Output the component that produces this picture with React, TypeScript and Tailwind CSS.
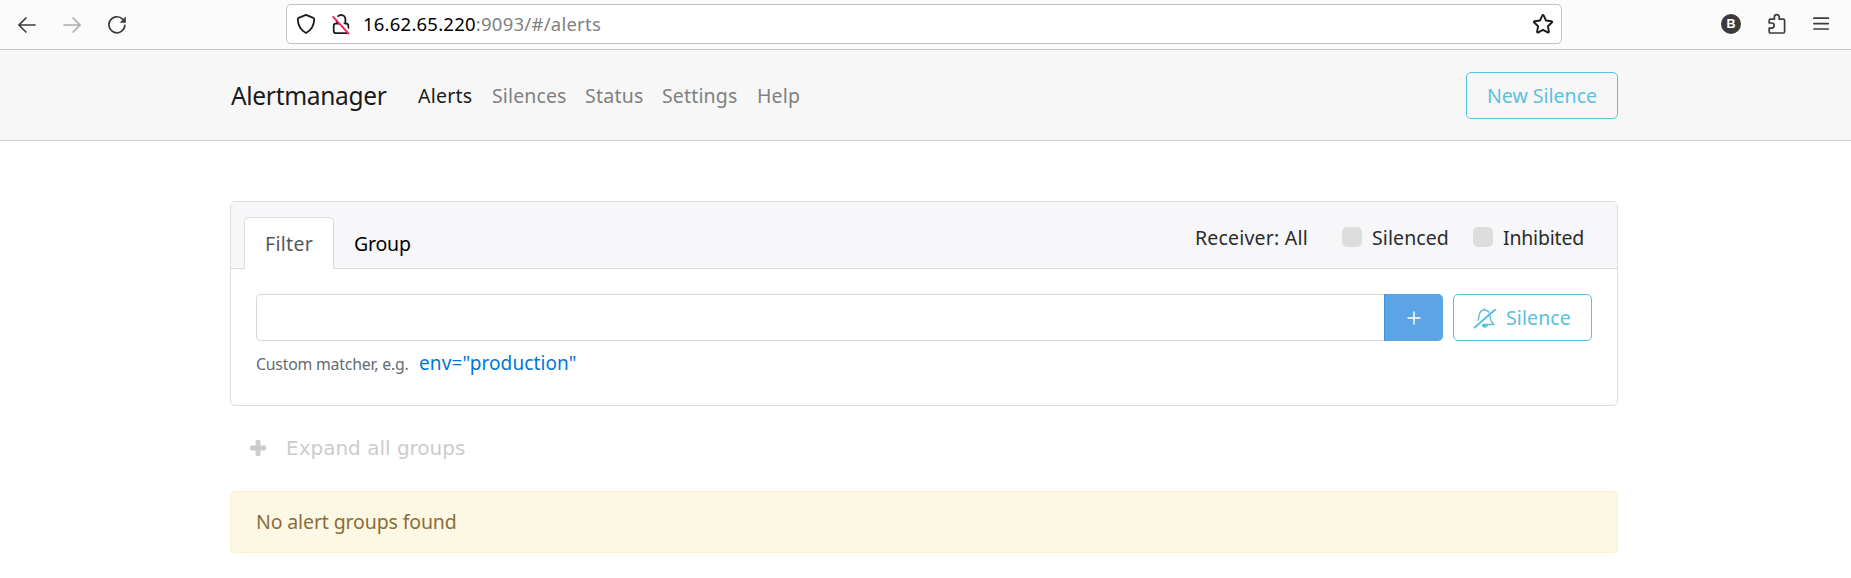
import React from "react";

const navLinks = [
  { label: "Silences", style: "w-[73px] tracking-[0.12px]" },
  { label: "Status", style: "w-[57px] tracking-[0.24px]" },
  { label: "Settings", style: "w-[75px] tracking-[0.16px]" },
  { label: "Help", style: "tracking-[0.17px]" },
];

function BrowserBar() {
  return (
    <div className="flex h-[50px] items-start border-b border-[#c6c6c8] bg-[#fbfbfb] text-[#3c3c3c]">
      <div className="flex h-[49px] w-[286px] items-center pl-[17px]">
        <svg width="20" height="20" viewBox="0 0 20 20" fill="none" stroke="currentColor" strokeWidth="1.7" strokeLinecap="round" strokeLinejoin="round">
          <path d="M18 10H1.9M8.9 3 1.9 10l7 7" />
        </svg>
        <svg className="ml-[25px] text-[#adadad]" width="20" height="20" viewBox="0 0 20 20" fill="none" stroke="currentColor" strokeWidth="1.7" strokeLinecap="round" strokeLinejoin="round">
          <path d="M2 10h16.1M11.1 3l7 7-7 7" />
        </svg>
        <svg className="ml-[25px]" width="20" height="20" viewBox="0 0 20 20" fill="none" stroke="currentColor" strokeWidth="1.7" strokeLinecap="round">
          <path d="M15.6 4.1A8 8 0 1 0 17.9 10.4" />
          <path d="M18.9 1.5v6.2h-6.2z" fill="currentColor" stroke="none" />
        </svg>
      </div>
      <div className="mt-1 flex h-10 w-[1276px] items-center rounded-[5px] border border-[#c2c2c4] bg-white pr-[7px] pl-[9px] text-[#1c1c1f]">
        <svg width="20" height="22" viewBox="0 0 20 22" fill="none" stroke="currentColor" strokeWidth="1.8" strokeLinejoin="round">
          <path d="M10 1.9 17.3 4.9Q18.2 5.3 18.2 6.3 18 15.8 10 20 2 15.8 1.8 6.3 1.8 5.3 2.7 4.9Z" />
        </svg>
        <svg className="ml-[15px]" width="20" height="22" viewBox="0 0 20 22" fill="none" strokeLinecap="round">
          <path d="M5.8 10.2V6.3A4.3 4.3 0 0 1 14.4 6.3v4" stroke="currentColor" strokeWidth="1.8" />
          <rect x="2.7" y="10.7" width="14.6" height="9.4" rx="2" stroke="currentColor" strokeWidth="1.8" />
          <path d="M3.4 3 18.6 19.4" stroke="white" strokeWidth="3.4" />
          <path d="M2.2 3.8 17.5 20.5" stroke="#f0265a" strokeWidth="1.9" />
        </svg>
        <span className="ml-[12px] text-[18.5px] leading-6 tracking-[0.22px] text-black">16.62.65.220</span>
        <span className="text-[18.5px] leading-6 tracking-[0.25px] text-[#818181]">:9093/#/alerts</span>
        <svg className="ml-auto" width="22" height="22" viewBox="0 0 22 22" fill="none" stroke="currentColor" strokeWidth="1.9" strokeLinejoin="round">
          <path d="M10.2 2.7Q11 1.4 11.8 2.7L14 7.5l5.4.7Q20.8 8.5 19.8 9.5L15.9 13.3l1 5.3Q17 20 15.7 19.4L11 16.8 6.3 19.4Q5 20 5.1 18.6l1-5.3L2.2 9.5Q1.2 8.5 2.6 8.2L8 7.5Z" />
        </svg>
      </div>
      <div className="ml-auto flex h-12 items-center pr-5">
        <span className="flex size-5 items-center justify-center rounded-full bg-[#3b3b3b] font-['Liberation_Sans',sans-serif] text-[12.5px] leading-none font-bold text-white">B</span>
        <svg className="ml-[26px]" width="20" height="22" viewBox="0 0 20 22" fill="none" stroke="currentColor" strokeWidth="1.7" strokeLinejoin="round">
          <path d="M2.2 10V7.6Q2.2 6.2 3.6 6.2H7.4V4A2.4 2.4 0 0 1 12.2 4V6.2H16.3Q17.6 6.2 17.6 7.5V18.6Q17.6 20 16.3 20H3.5Q2.2 20 2.2 18.6V15.1H4.6A2.5 2.5 0 0 0 4.6 10Z" />
        </svg>
        <svg className="ml-6" width="20" height="20" viewBox="0 0 20 20" stroke="currentColor" strokeWidth="1.7" strokeLinecap="round">
          <path d="M2.9 4.2h14.4M2.9 9.6h14.4M2.9 15h14.4" />
        </svg>
      </div>
    </div>
  );
}

function Navbar() {
  return (
    <header className="h-[91px] border-b border-[#d5d5d5] bg-[#f7f7f7]">
      <div className="ml-[230px] flex h-[90px] w-[1388px] items-center">
        <a className="w-[188px] pt-0.5 pl-px text-[24.5px] tracking-[-0.32px] text-[#1a1a1a]">Alertmanager</a>
        <nav className="flex items-center gap-5 pt-0.5 text-[19.5px] whitespace-nowrap text-[#808080]">
          <a className="w-[54px] tracking-[0.24px] text-[#1a1a1a]">Alerts</a>
          {navLinks.map((link) => (
            <a key={link.label} className={link.style}>{link.label}</a>
          ))}
        </nav>
        <button className="ml-auto h-[47px] w-[152px] rounded-[5px] border border-[#5bc0de] pt-px text-[19.5px] text-[#5bc0de]">
          New Silence
        </button>
      </div>
    </header>
  );
}

function Toggle({ label, className }: { label: string; className: string }) {
  return (
    <label className="flex items-center gap-[10px]">
      <span className="mb-0.5 size-5 rounded-[5px] bg-[#dddddd]" />
      <span className={className}>{label}</span>
    </label>
  );
}

function FilterCard() {
  return (
    <section className="mt-[60px] h-[205px] rounded-[5px] border border-[#dcdddf]">
      <div className="flex h-[67px] items-end justify-between rounded-t-[4px] border-b border-[#d9dadc] bg-[#f7f7f9] text-[19.5px]">
        <div className="-mb-px ml-[13px] flex h-[52px]">
          <a className="h-[52px] w-[90px] rounded-t-[5px] border border-b-0 border-[#dcdddf] bg-white pl-5 leading-[52px] tracking-[0.3px] text-[#55595c]">Filter</a>
          <a className="ml-[20px] leading-[53px] tracking-[-0.18px] text-black">Group</a>
        </div>
        <div className="mb-[15px] flex items-center leading-[30px] text-[#292b2c]">
          <span className="w-[147px] tracking-[0.2px]">Receiver: All</span>
          <Toggle label="Silenced" className="w-[101px] tracking-[0.09px]" />
          <Toggle label="Inhibited" className="w-[114px] tracking-[-0.2px]" />
        </div>
      </div>
      <div className="px-[25px] pt-[25px]">
        <div className="flex">
          <input aria-label="Matcher" className="h-[47px] w-[1128px] rounded-l-[5px] border border-r-0 border-[#d6d7d9] px-4 text-[19.5px] outline-none" />
          <button aria-label="Add matcher" className="flex h-[47px] w-[59px] items-center justify-center rounded-r-[5px] border-l border-[#3f95e0] bg-[#5ba4e6] pr-px text-white">
            <svg width="14" height="14" viewBox="0 0 14 14" stroke="currentColor" strokeWidth="1.5">
              <path d="M7 .5v13M.5 7h13" />
            </svg>
          </button>
          <button className="ml-[10px] flex h-[47px] w-[139px] items-center rounded-[5px] border border-[#5bc0de] pl-[19px] text-[19.5px] tracking-[0.1px] text-[#5bc0de]">
            <svg width="23" height="22" viewBox="0 0 23 22" fill="none" stroke="currentColor" strokeLinecap="round" strokeLinejoin="round">
              <path d="M11.4 1.8v.9M4.8 13.2C6 11.4 5.9 9.8 6.3 7.5 7 4.4 8.6 3 11.4 3c2.3 0 3.7.8 4.5 2.4M17 8.2c.2 4 1.3 7 4 9.3H9.8" strokeWidth="1.4" />
              <path d="M1.6 20.5 22 2.8" strokeWidth="2" />
              <path d="M8.8 18h6c-.2 1.8-1.3 2.8-3 2.8s-2.8-1-3-2.8Z" fill="currentColor" stroke="none" />
            </svg>
            <span className="ml-[10px]">Silence</span>
          </button>
        </div>
        <div className="mt-2 flex h-7 items-baseline leading-7">
          <span className="w-[163px] text-[15.8px] tracking-[-0.2px] text-[#636c72]">Custom matcher, e.g.</span>
          <a className="text-[19px] tracking-[0.1px] text-[#0275d8]">env=&quot;production&quot;</a>
        </div>
      </div>
    </section>
  );
}

export default function App() {
  return (
    <div className="h-[578px] overflow-hidden bg-white font-['Noto_Sans',sans-serif]">
      <BrowserBar />
      <Navbar />
      <main className="ml-[230px] w-[1388px]">
        <FilterCard />
        <button className="mt-[26px] flex h-8 items-center pl-5 font-['DejaVu_Sans',sans-serif] text-[20px] text-[#cccccc]">
          <svg width="16" height="16" viewBox="0 0 16 16" fill="currentColor">
            <path d="M6.9 0h2.2Q10.4 0 10.4 1.3v4.3h4.3Q16 5.6 16 6.9v2.2q0 1.3-1.3 1.3h-4.3v4.3Q10.4 16 9.1 16H6.9Q5.6 16 5.6 14.7v-4.3H1.3Q0 10.4 0 9.1V6.9Q0 5.6 1.3 5.6h4.3V1.3Q5.6 0 6.9 0Z" />
          </svg>
          <span className="ml-5">Expand all groups</span>
        </button>
        <div className="mt-[27px] flex h-[62px] items-center rounded-[5px] border border-[#faf2cc] bg-[#fcf8e3] pl-[25px] text-[19.5px] tracking-[-0.13px] text-[#8a6d3b]">
          No alert groups found
        </div>
      </main>
    </div>
  );
}
